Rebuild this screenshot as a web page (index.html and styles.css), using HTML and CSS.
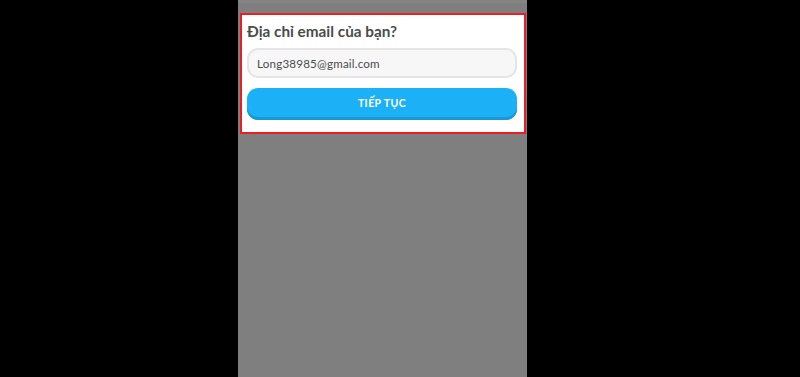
FILE: index.html
```html
<!DOCTYPE html>
<html lang="vi">
<head>
<meta charset="utf-8">
<title>Email</title>
<link rel="stylesheet" href="styles.css">
</head>
<body>
<div class="screen">
  <div class="phone">
    <div class="topstrip"></div>
    <div class="card">
      <h1 class="title">Địa chỉ email của bạn?</h1>
      <div class="field">Long38985@gmail.com</div>
      <button class="btn" type="button">TIẾP TỤC</button>
    </div>
  </div>
</div>
</body>
</html>
```
FILE: styles.css
```css
html, body {
  margin: 0;
  padding: 0;
  background: #000;
  width: 800px;
  height: 377px;
  overflow: hidden;
}
.screen {
  display: flex;
  height: 377px;
}
.phone {
  margin-left: 238px;
  width: 289px;
  height: 377px;
  background: #7f7f7f;
  display: flex;
  flex-direction: column;
}
.topstrip {
  height: 3px;
  background: #858585;
  margin-bottom: 10px;
}
.card {
  margin-left: 2px;
  width: 286px;
  box-sizing: border-box;
  border: 2px solid #ee1c25;
  background: #fff;
  padding: 5px 7px 12px 5px;
  display: flex;
  flex-direction: column;
  font-family: "Lato", sans-serif;
}
.title {
  margin: 0;
  font-size: 15.3px;
  line-height: 23px;
  font-weight: 700;
  color: #4b4b4b;
}
.field {
  margin-top: 5px;
  height: 30px;
  box-sizing: border-box;
  border: 2px solid #e5e5e5;
  border-radius: 11px;
  background: #f7f7f7;
  padding-left: 8px;
  display: flex;
  align-items: center;
  font-size: 11.6px;
  letter-spacing: 0.2px;
  color: #4b4b4b;
}
.btn {
  margin-top: 10px;
  height: 32px;
  box-sizing: border-box;
  border: none;
  border-radius: 11px;
  background: #1cb0f6;
  box-shadow: 0 -3px 0 #1899d6 inset;
  color: #fff;
  font-family: "Lato", sans-serif;
  font-weight: 700;
  font-size: 10.5px;
  letter-spacing: 0.4px;
  padding: 0 0 3px 0;
}
```
